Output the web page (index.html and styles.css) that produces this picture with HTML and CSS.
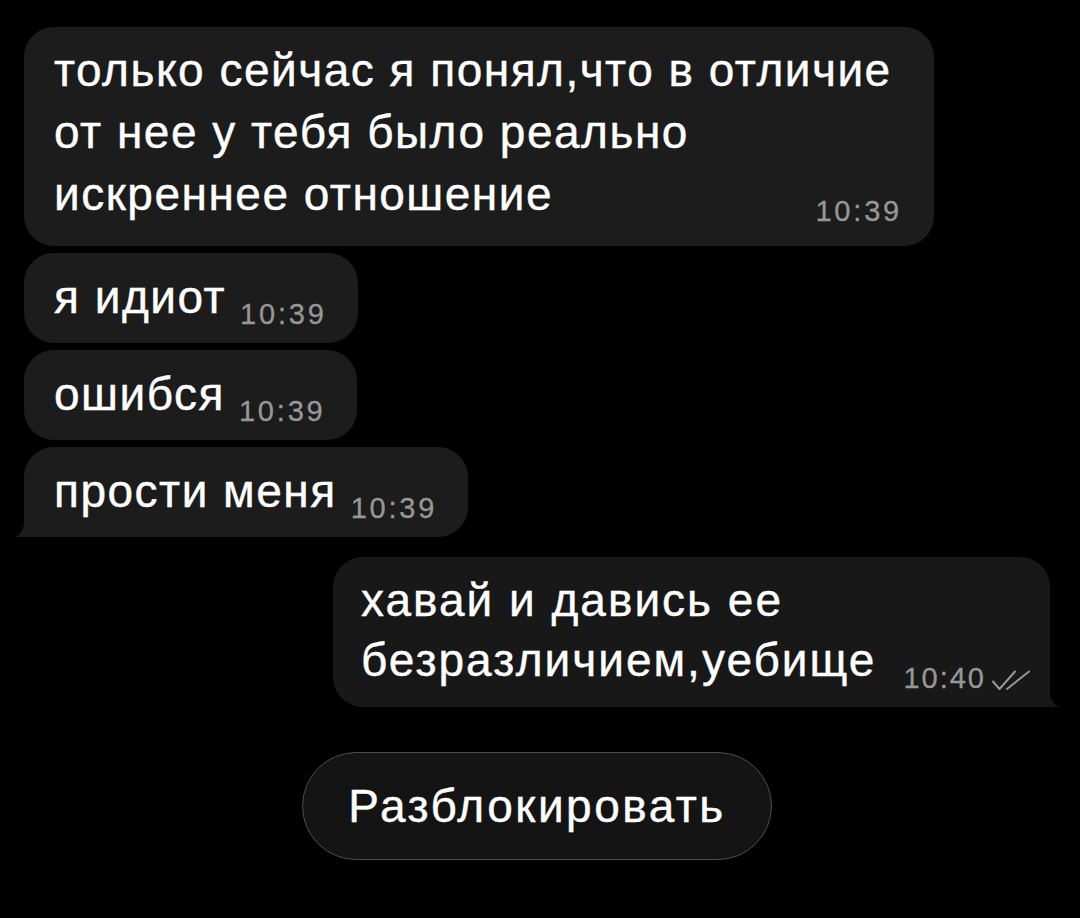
FILE: index.html
```html
<!DOCTYPE html>
<html lang="ru">
<head>
<meta charset="utf-8">
<title>Чат</title>
<link rel="stylesheet" href="styles.css">
</head>
<body>
<main class="chat">
  <div class="bubble in wide">только сейчас я понял,что в отличие от нее у тебя было реально искреннее отношение<span class="time">10:39</span></div>
  <div class="bubble in">я идиот<span class="time">10:39</span></div>
  <div class="bubble in">ошибся<span class="time">10:39</span></div>
  <div class="bubble in tail">прости меня<span class="time">10:39</span></div>
  <div class="bubble out tail">хавай и давись ее безразличием,уебище<span class="time">10:40<svg class="ticks" width="38" height="21" viewBox="0 0 38 21" aria-hidden="true"><path d="M1 11.5 L7.5 19 L23 1.5 M15 19 L37 1.5" fill="none" stroke="currentColor" stroke-width="2" stroke-linecap="round" stroke-linejoin="round"/></svg></span></div>
  <button class="unblock" type="button">Разблокировать</button>
</main>
</body>
</html>
```
FILE: styles.css
```css
html {
  background: #000;
}

body {
  margin: 0;
  font-family: "Liberation Sans", Arial, sans-serif;
  color: #fff;
}

.chat {
  display: flex;
  flex-direction: column;
  align-items: flex-start;
  padding: 27px 30px 0 24px;
}

.bubble {
  position: relative;
  display: flow-root;
  box-sizing: border-box;
  background: #1c1c1c;
  color: #fff;
  font-size: 46px;
  line-height: 62px;
  letter-spacing: 1.5px;
  -webkit-text-stroke: 0.4px #fff;
  padding: 13px 31px 15px 30px;
  border-radius: 30px;
  margin-top: 7px;
}

.bubble:first-child {
  margin-top: 0;
}

.bubble.wide {
  max-width: 910px;
  padding: 12px 32px 21px 30px;
}

.time {
  float: right;
  font-size: 29px;
  line-height: 29px;
  letter-spacing: 2.8px;
  color: #979797;
  -webkit-text-stroke: 0.3px #979797;
  margin: 34px 0 -20px 14px;
  display: flex;
  align-items: flex-end;
}

.ticks {
  margin-left: 6px;
  margin-bottom: 2px;
}

.bubble.out {
  align-self: flex-end;
  max-width: 717px;
  background: #181818;
  line-height: 60px;
  letter-spacing: 2px;
  padding: 13px 20px 17px 28px;
  margin-top: 20px;
}

.bubble.out .time {
  letter-spacing: 2px;
}

/* speech tails: a bubble-coloured block with a black, rounded cut-out */
.bubble.tail::before,
.bubble.tail::after {
  content: "";
  position: absolute;
  bottom: 0;
  height: 22px;
  z-index: -1;
}

.bubble.in.tail {
  border-bottom-left-radius: 0;
}

.bubble.in.tail::before {
  left: -11px;
  width: 30px;
  background: #1c1c1c;
}

.bubble.in.tail::after {
  left: -14px;
  width: 14px;
  background: #000;
  border-bottom-right-radius: 11px 15px;
}

.bubble.out.tail {
  border-bottom-right-radius: 0;
}

.bubble.out.tail::before {
  right: -11px;
  width: 30px;
  background: #181818;
}

.bubble.out.tail::after {
  right: -14px;
  width: 14px;
  background: #000;
  border-bottom-left-radius: 11px 15px;
}

.unblock {
  align-self: center;
  margin-top: 45px;
  width: 470px;
  height: 108px;
  border: 1.5px solid #4d4d4d;
  border-radius: 54px;
  background: #141414;
  color: #fff;
  font-family: inherit;
  font-size: 46px;
  letter-spacing: 2.5px;
  -webkit-text-stroke: 0.4px #fff;
  padding: 0;
}
```
